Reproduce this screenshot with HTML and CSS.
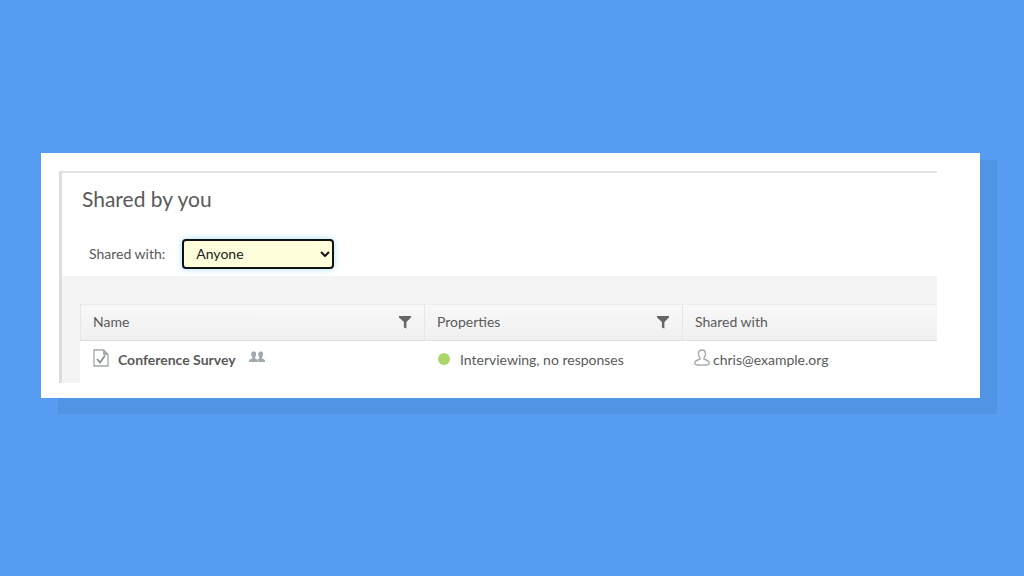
FILE: index.html
```html
<!DOCTYPE html>
<html lang="en">
<head>
    <meta charset="UTF-8">
    <meta name="viewport" content="width=device-width, initial-scale=1.0">
    <title>Shared by you</title>
    <link rel="stylesheet" href="styles.css">
</head>
<body>
    <main class="card">
        <section class="panel">
            <div class="top">
                <h1>Shared by you</h1>
                <div class="filter">
                    <label for="sharedWith">Shared with:</label>
                    <div class="select">
                        <select id="sharedWith">
                            <option>Anyone</option>
                        </select>
                        <svg class="arrow" width="10" height="6" viewBox="0 0 10 6"><path d="M1 1l4 4 4-4" fill="none" stroke="#111" stroke-width="2"/></svg>
                    </div>
                </div>
            </div>
            <div class="list">
                <table>
                    <colgroup>
                        <col class="col-name">
                        <col class="col-props">
                        <col>
                    </colgroup>
                    <thead>
                        <tr>
                            <th>
                                <div class="head">Name
                                    <button type="button" aria-label="Filter by name"><svg width="14" height="14" viewBox="0 0 14 14"><path d="M1 1h12v1.500L8.400 7v6.500L5.900 12.500V7L1 2.500z" fill="#666"/></svg></button>
                                </div>
                            </th>
                            <th>
                                <div class="head">Properties
                                    <button type="button" aria-label="Filter by properties"><svg width="14" height="14" viewBox="0 0 14 14"><path d="M1 1h12v1.500L8.400 7v6.500L5.900 12.500V7L1 2.500z" fill="#666"/></svg></button>
                                </div>
                            </th>
                            <th>Shared with</th>
                        </tr>
                    </thead>
                    <tbody>
                        <tr>
                            <td>
                                <div class="cell survey">
                                    <svg class="icon" width="16" height="18" viewBox="0 0 16 18" fill="none"><path d="M1 1h9.500L15 5.500V17H1z" stroke="#a3a9ab" stroke-width="1.300"/><path d="M10.500 1v4.500H15z" fill="#a3a9ab" stroke="#a3a9ab"/><path d="M4 10l3 3.500L12 6.500" stroke="#8a9092" stroke-width="1.800"/></svg>
                                    <b>Conference Survey</b>
                                    <svg class="people" width="16" height="12" viewBox="0 0 16 12" fill="#a0a9ac"><path d="M9.500 11H16V9.500C15.700 8.300 13.700 8 13 7.300V6c1.100-1 1.200-2.200 1-3.700C13.800.9 12.900.5 11.700.5S9.600 1 9.300 2.300c-.2 1.500.1 2.800 1 3.700v1.300c-.4.400-1 .7-1.500.9.600.7.700 1.500.7 2.800z"/><path d="M0 11V9.500C.3 8.300 2.600 8 3.300 7.300V6c-1-1-1.200-2.200-1-3.700C2.500.9 3.400.5 4.700.5S6.900 1 7.100 2.300c.2 1.500 0 2.700-1 3.700v1.300C6.800 8 8.600 8.300 8.900 9.500V11z"/></svg>
                                </div>
                            </td>
                            <td>
                                <div class="cell status"><span class="dot"></span>Interviewing, no responses</div>
                            </td>
                            <td>
                                <div class="cell user">
                                    <svg class="icon" width="16" height="17" viewBox="0 0 18 18" preserveAspectRatio="none"><path d="M6.700 9.300C5.300 7.600 4.900 5.700 5.100 4 5.400 2 6.900 1 9 1s3.600 1 3.900 3c.2 1.700-.2 3.600-1.600 5.300v1.400c1.600.9 5 1.100 5.700 3.300.4 1.500-.2 2.300-1.500 2.600-3.500.5-9.500.5-13 0C1.200 16.300.6 15.500 1 14c.7-2.200 4.100-2.400 5.700-3.300z" fill="none" stroke="#a3a9ab" stroke-width="1.500"/></svg>
                                    chris@example.org
                                </div>
                            </td>
                        </tr>
                    </tbody>
                </table>
            </div>
        </section>
    </main>
</body>
</html>
```
FILE: styles.css
```css
*{
    margin: 0;
    padding: 0;
    box-sizing: border-box;
}
body{
    min-height: 100vh;
    padding: 153px 44px 0 41px;
    background-color: #559cf2;
    color: #5a5a5a;
    font-family: "Lato", sans-serif;
    font-size: 14px;
}
.card{
    padding: 18px 43px 15px 18px;
    background-color: white;
    box-shadow: 17px 16px #5094e5, 17px 7px #5094e5;
}
.panel{
    border-left: 3px solid #dcddde;
    border-top: 2px solid #e0e3e6;
}
.top{
    padding: 12px 20px 7px;
}
h1{
    font-size: 21px;
    font-weight: 400;
    line-height: 28px;
}
.filter{
    display: flex;
    align-items: center;
    gap: 17px;
    margin-top: 26px;
    padding-left: 7px;
}
.filter label{
    padding-bottom: 2px;
}
.select{
    position: relative;
}
select{
    display: block;
    appearance: none;
    width: 152px;
    height: 30px;
    padding: 0 0 2px 12px;
    border: 2px solid #111;
    border-radius: 4px;
    background-color: #ffffdc;
    box-shadow: 0 0 6px #a5dff5;
    color: #222;
    font: inherit;
}
/* sits over the right end of the drop-down */
.arrow{
    position: absolute;
    top: 12px;
    right: 4px;
    pointer-events: none;
}
.list{
    padding: 28px 0 0 18px;
    background-color: #f4f4f4;
}
table{
    width: 100%;
    table-layout: fixed;
    border-collapse: separate;
    border-spacing: 0;
    background-color: white;
}
.col-name{
    width: 344px;
}
.col-props{
    width: 258px;
}
th{
    height: 37px;
    padding: 0 12px 2px;
    border-top: 1px solid #ececec;
    border-bottom: 1px solid #e0e0e0;
    border-left: 1px solid #e6e6e6;
    background: linear-gradient(#f8f8f8, #f0f0f0);
    font-weight: 400;
    text-align: left;
}
.head{
    display: flex;
    justify-content: space-between;
    align-items: center;
}
button{
    display: flex;
    border: none;
    background: none;
    cursor: pointer;
}
td{
    height: 42px;
    padding: 0 12px;
    vertical-align: top;
}
.cell{
    display: flex;
    align-items: center;
    height: 36px;
}
.icon{
    margin-bottom: 3px;
}
.survey{
    gap: 9px;
    padding-left: 1px;
}
.status{
    gap: 10px;
    padding-left: 2px;
}
.user{
    gap: 3px;
}
.people{
    margin: 0 0 4px 4px;
}
.dot{
    width: 12px;
    height: 12px;
    border-radius: 50%;
    background-color: #acd56c;
}
```
